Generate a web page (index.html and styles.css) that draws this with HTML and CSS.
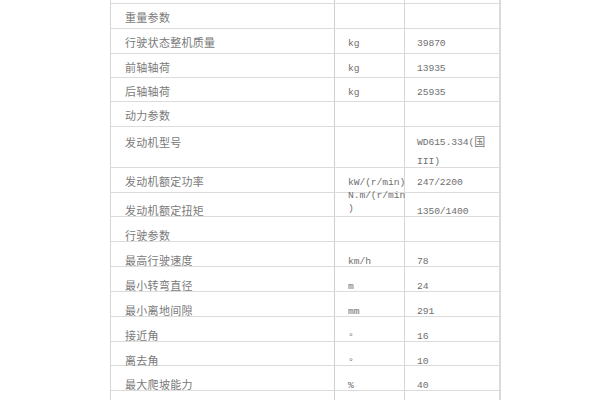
FILE: index.html
```html
<!DOCTYPE html>
<html lang="zh">
<head>
<meta charset="utf-8">
<link rel="stylesheet" href="styles.css">
</head>
<body>
<div class="sheet">
  <div class="row h4"><div class="c1"></div><div class="c2"></div><div class="c3"></div></div>
  <div class="row h25 mid"><div class="c1">重量参数</div><div class="c2"></div><div class="c3"></div></div>
  <div class="row h25 mid"><div class="c1">行驶状态整机质量</div><div class="c2"><span class="lat">kg</span></div><div class="c3"><span class="lat">39870</span></div></div>
  <div class="row h24 mid"><div class="c1">前轴轴荷</div><div class="c2"><span class="lat">kg</span></div><div class="c3"><span class="lat">13935</span></div></div>
  <div class="row h24 mid"><div class="c1">后轴轴荷</div><div class="c2"><span class="lat">kg</span></div><div class="c3"><span class="lat">25935</span></div></div>
  <div class="row h25 mid"><div class="c1">动力参数</div><div class="c2"></div><div class="c3"></div></div>
  <div class="row h41 tall"><div class="c1">发动机型号</div><div class="c2"></div><div class="c3 two"><span class="lat">WD615.334(</span>国<br><span class="lat">III)</span></div></div>
  <div class="row h25 mid"><div class="c1">发动机额定功率</div><div class="c2"><span class="lat">kW/(r/min)</span></div><div class="c3"><span class="lat">247/2200</span></div></div>
  <div class="row h24 torque"><div class="c1">发动机额定扭矩</div><div class="c2"><span class="lat stack">N.m/(r/min<br>)</span></div><div class="c3"><span class="lat">1350/1400</span></div></div>
  <div class="row h25 low"><div class="c1">行驶参数</div><div class="c2"></div><div class="c3"></div></div>
  <div class="row h25 low"><div class="c1">最高行驶速度</div><div class="c2"><span class="lat">km/h</span></div><div class="c3"><span class="lat">78</span></div></div>
  <div class="row h25 low"><div class="c1">最小转弯直径</div><div class="c2"><span class="lat">m</span></div><div class="c3"><span class="lat">24</span></div></div>
  <div class="row h25 low"><div class="c1">最小离地间隙</div><div class="c2"><span class="lat">mm</span></div><div class="c3"><span class="lat">291</span></div></div>
  <div class="row h25 low"><div class="c1">接近角</div><div class="c2"><span class="lat">°</span></div><div class="c3"><span class="lat">16</span></div></div>
  <div class="row h24 low"><div class="c1">离去角</div><div class="c2"><span class="lat">°</span></div><div class="c3"><span class="lat">10</span></div></div>
  <div class="row h25 low"><div class="c1">最大爬坡能力</div><div class="c2"><span class="lat">%</span></div><div class="c3"><span class="lat">40</span></div></div>
  <div class="row h25 low"><div class="c1"></div><div class="c2"></div><div class="c3"></div></div>
</div>
</body>
</html>
```
FILE: styles.css
```css
html, body {
  margin: 0;
  padding: 0;
  background: #ffffff;
}
body {
  width: 600px;
  height: 400px;
  overflow: hidden;
}
.sheet {
  margin-left: 110px;
  width: 391px;
  box-sizing: border-box;
  border-left: 1px solid #d6d6d6;
  border-right: 2px solid #dadada;
  font-family: "Noto Sans CJK SC", "Noto Sans", sans-serif;
  font-size: 11px;
  letter-spacing: 0.3px;
  color: #7a7a7a;
}
.row {
  display: flex;
  box-sizing: border-box;
  border-bottom: 1px solid #dcdcdc;
  line-height: 14px;
}
.h4 { height: 4px; }
.h24 { height: 24px; }
.h25 { height: 25px; }
.h41 { height: 41px; }
.row > div {
  box-sizing: border-box;
  white-space: nowrap;
}
.c1 {
  width: 224px;
  padding-left: 14px;
  border-right: 1px solid #cfcfcf;
}
.c2 {
  width: 70px;
  padding-left: 13px;
  border-right: 1px solid #d6d6d6;
}
.c3 {
  flex: 1;
  padding-left: 12px;
}
.mid > div { padding-top: 6px; }
.low > div { padding-top: 11px; }
.tall > div { padding-top: 8px; }
.tall > .two { padding-top: 6px; line-height: 17px; }
.torque > div { padding-top: 10px; }
.torque > .c2 { padding-top: 0; }
.lat {
  font-family: "Liberation Mono", "DejaVu Sans Mono", monospace;
  font-size: 9.7px;
  letter-spacing: -0.1px;
  color: #707070;
  position: relative;
  top: -1px;
}
.stack {
  display: block;
  line-height: 13px;
  margin-top: -3px;
}
```
